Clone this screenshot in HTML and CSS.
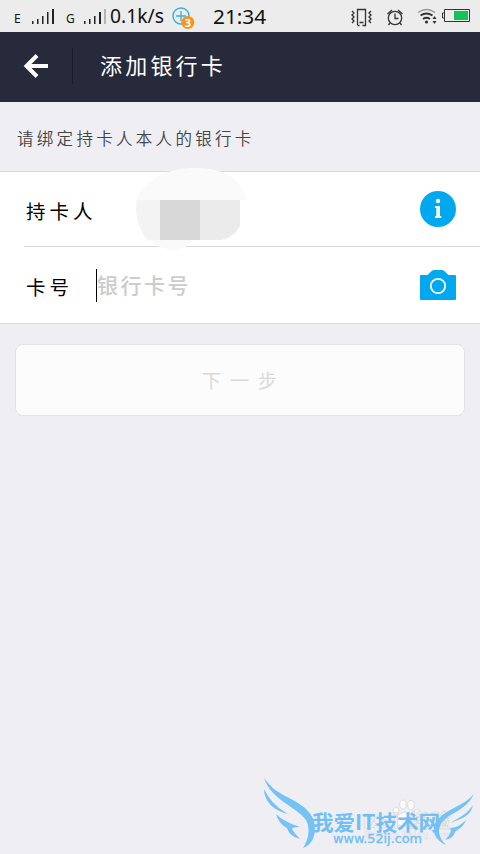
FILE: index.html
```html
<!DOCTYPE html>
<html lang="zh-CN">
<head>
<meta charset="utf-8">
<title>添加银行卡</title>
<link rel="stylesheet" href="styles.css">
</head>
<body>
<main class="screen">
  <div class="status">
    <span class="carrier">E</span>
    <svg class="signal" width="23" height="16" viewBox="0 0 23 16" fill="#222"><path d="M0 13h1.500v3H0zM5 11h1.500v5H5zM10 8h1.500v8H10zM15 4h1.500v12H15zM20 1h2v15h-2z"/></svg>
    <span class="carrier second">G</span>
    <svg class="signal" width="23" height="16" viewBox="0 0 23 16" fill="#222"><path d="M0 13h1.500v3H0zM5 11h1.500v5H5zM10 8h1.500v8H10zM15 4h2v12h-2z"/><path fill="#b5b5b5" d="M20 1h2v15h-2z"/></svg>
    <span class="speed">0.1k/s</span>
    <svg class="badge" width="24" height="24" viewBox="0 0 24 24"><circle cx="9" cy="9" r="8" fill="none" stroke="#38b0dc" stroke-width="1.4"/><path d="M9 4v10M4 9h10" stroke="#38b0dc" stroke-width="1.3"/><circle cx="15.8" cy="15.4" r="6.5" fill="#f7931e"/><text class="badge-num" x="15.8" y="19.6" text-anchor="middle">3</text></svg>
    <span class="clock">21:34</span>
    <svg class="system" width="122" height="24" viewBox="0 0 122 24" fill="none" stroke="#333" stroke-width="1.3">
      <path d="M7.5 22V6.500h8V22.500h-3M7.500 22.500h2M9.500 19.500h4"/>
      <path d="M2 8l2 2-2 2 2 2-2 2 2 2-2 2M21 8l-2 2 2 2-2 2 2 2-2 2 2 2"/>
      <circle cx="45" cy="15" r="6.700"/><path d="M45 10.500V15.500h3.500M37.500 11l4.500-4M52.500 11L48 7M40 20l-1.500 2M50 20l1.500 2"/>
      <path stroke="#999" d="M68 9.500q8.500-6 17 0"/><path stroke-width="1.800" d="M70.500 12.500q6-4 12 0M73 16q3.500-2.500 7 0"/><circle cx="76.500" cy="19" r="1.600" fill="#333" stroke="none"/><path fill="#333" stroke="none" d="M82.500 16l2-3 2 3zM82.500 18l2 3 2-3z"/>
      <path stroke-width="1" d="M94.500 6.500h25v12h-25zM94 10h-1.500v5H94"/><path fill="#15c15b" stroke="none" d="M104 8h14v9h-14z"/>
    </svg>
  </div>
  <header class="header">
    <svg class="back" width="26" height="26" viewBox="0 0 26 26" fill="none" stroke="#fff" stroke-width="4"><path d="M25 13H4M14 2.500L3.500 13 14 23.500"/></svg>
    <h1 class="title">添加银行卡</h1>
  </header>
  <p class="hint">请绑定持卡人本人的银行卡</p>
  <section class="form">
    <div class="row holder">
      <span class="label">持卡人</span>
      <svg class="icon" width="36" height="36" viewBox="0 0 36 36"><circle cx="18" cy="18" r="18" fill="#00a9ef"/><circle cx="18" cy="10" r="2.200" fill="#fff"/><path fill="#fff" d="M15 15h5v10h1.300v2H15v-2h1.300v-8H15z"/></svg>
    </div>
    <div class="row number">
      <span class="label">卡号</span>
      <span class="input">银行卡号</span>
      <svg class="icon" width="36" height="30" viewBox="0 0 36 30"><path fill="#00a9ef" d="M1 5h6.500L12 .800Q12.700 0 14 0h8q1.300 0 2 .800L28.500 5H35q1 0 1 1v23q0 1-1 1H1q-1 0-1-1V6q0-1 1-1z"/><circle cx="18" cy="16" r="7.200" fill="none" stroke="#fff" stroke-width="1.800"/></svg>
    </div>
    <svg class="mosaic" width="110" height="84" viewBox="0 0 110 84">
      <path fill="#fafafa" d="M0 34C2 22 13 12 27 6 43-1 69-2 86 4c13 5 22 15 24 28H84v40H58C50 80 41 84 31 81 12 77-2 58 0 34z"/>
      <path fill="#f3f3f3" d="M1 32h23v40H11Q-3 53 1 32z"/>
      <path fill="#d8d8d8" d="M24 32h40v40H24z"/>
      <path fill="#ebebeb" d="M64 32h40v26q-6 11-18 14H64z"/>
    </svg>
  </section>
  <button class="next" type="button">下一步</button>
  <svg class="watermark" width="225" height="84" viewBox="0 0 225 84">
    <g fill="#fafafa" stroke="#d6d6da" stroke-width=".8"><ellipse cx="141" cy="41" rx="3" ry="4"/><ellipse cx="148" cy="34.500" rx="3.300" ry="4.500"/><ellipse cx="156" cy="35" rx="3.300" ry="4.500"/><ellipse cx="162" cy="43" rx="3" ry="4"/><path d="M151 42q5 1 10 8 1 7-7 6-5-1-9 0-7-1-5-7 5-7 11-7z"/></g>
    <text class="faint" x="108" y="58" textLength="87">Bai 经验</text>
    <text class="faint small" x="109" y="69" textLength="87">jingyan.baidu.com</text>
    <g fill="#75c3f5">
      <path d="M9 8C17 19 24 23 36 29 50 36 60 45 60 58 60 68 56 75 48 78 53 70 56 60 51 50 42 37 16 30 9 8z"/>
      <path d="M9 19C14 29 20 36 33 44 19 41 9 31 9 19zM21 44Q29 52 45 57 37 57 37 59 40 64 45 69 34 66 32 58 24 54 21 44z"/>
      <path d="M219 24C211 40 197 42 188 51 181 59 184 68 191 75 179 70 175 58 183 49 193 38 209 36 219 24z"/>
      <path d="M218 35C216 46 206 49 195 53 206 47 213 43 218 35zM211 50C208 58 203 59 200 62 198 68 194 69 190 70 195 65 197 61 195 58 201 58 206 55 211 50z"/>
    </g>
    <text class="brand" x="57" y="60" textLength="128" lengthAdjust="spacingAndGlyphs">我爱IT技术网</text>
    <text class="url" x="78" y="73" textLength="89" lengthAdjust="spacingAndGlyphs">www.52ij.com</text>
  </svg>
</main>
</body>
</html>
```
FILE: styles.css
```css
* { box-sizing: border-box; }
body { margin: 0; }
.screen {
  position: relative;
  width: 480px;
  height: 854px;
  overflow: hidden;
  background: #efeef3;
  font-family: "Noto Sans CJK SC", sans-serif;
}
.status {
  display: flex;
  height: 32px;
  background: #ececec;
  color: #111;
  font-family: "Noto Sans", sans-serif;
  white-space: nowrap;
}
.status svg { flex: none; }
.carrier { width: 18px; margin-left: 14px; font: 12px/37px "Noto Sans", sans-serif; }
.carrier.second { width: 18px; margin-left: 11px; }
.signal { margin-top: 8px; }
.speed { width: 62px; margin-left: 3px; font-size: 19.300px; line-height: 32px; }
.badge { margin-top: 7px; }
.badge-num { fill: #fff; font: bold 11px "Noto Sans", sans-serif; }
.clock { width: 58px; margin-left: 17px; font-size: 20.800px; line-height: 32px; }
.system { margin-left: 79px; margin-top: 3px; }
.header {
  display: flex;
  align-items: center;
  height: 70px;
  padding-left: 23px;
  background: #272a3b;
}
.back { margin-top: -2px; }
.title {
  height: 36px;
  margin: -2px 0 0 23px;
  padding-left: 27px;
  border-left: 1px solid #181b28;
  color: #fff;
  font-size: 22px;
  font-weight: 400;
  line-height: 32px;
  letter-spacing: 3.200px;
}
.hint {
  height: 69px;
  margin: 0;
  padding-left: 17px;
  color: #444;
  font-size: 16.500px;
  font-weight: 350;
  line-height: 72px;
  letter-spacing: 3.300px;
}
.form {
  position: relative;
  height: 153px;
  border: solid #dadadc;
  border-width: 1px 0;
  background: #fff;
}
.row {
  display: flex;
  align-items: center;
  height: 75px;
  margin-left: 24px;
  padding: 0 24px 0 2px;
}
.holder { border-bottom: 1px solid #d9d9d9; }
.number { height: 76px; }
.label { width: 70px; padding-top: 4px; color: #000; font-size: 19.500px; line-height: 30px; letter-spacing: 4px; white-space: nowrap; }
.input {
  height: 33px;
  border-left: 1px solid #000;
  color: #ccc;
  font-size: 21px;
  font-weight: 500;
  line-height: 31px;
  letter-spacing: 2.500px;
}
.icon { margin-left: auto; }
.mosaic { position: absolute; left: 136px; top: -4px; }
.next {
  display: block;
  width: 450px;
  height: 72px;
  margin: 20px 0 0 15px;
  padding: 0 0 0 8px;
  border: 1px solid #e3e3e5;
  border-radius: 8px;
  background: #fcfcfc;
  color: #d9d9d9;
  font-family: inherit;
  font-size: 19px;
  line-height: 70px;
  letter-spacing: 9px;
}
.watermark { position: absolute; left: 255px; top: 770px; }
.faint { fill: #f5f5f8; stroke: #d2d2d8; stroke-width: .7px; font: bold 19px "Noto Sans CJK SC", sans-serif; }
.faint.small { font-size: 9px; stroke-width: .3px; }
.brand { fill: #70c0f5; font: bold 21px "Noto Sans CJK SC", sans-serif; }
.url { fill: #70c0f5; stroke: #70c0f5; stroke-width: .3px; font: 11.500px "DejaVu Sans", sans-serif; }
```
